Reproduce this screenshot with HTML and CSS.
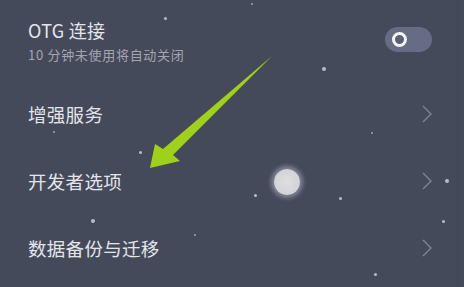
FILE: index.html
```html
<!DOCTYPE html>
<html lang="zh-CN">
<head>
<meta charset="utf-8">
<link rel="stylesheet" href="styles.css">
</head>
<body>
<div class="screen">
  <div class="list">
    <div class="row otg">
      <div class="otg-text">
        <div class="title">OTG 连接</div>
        <div class="sub">10 分钟未使用将自动关闭</div>
      </div>
      <div class="toggle"><span class="knob"></span></div>
    </div>
    <div class="row item">
      <span class="title">增强服务</span>
      <svg class="chev" width="10" height="18" viewBox="0 0 10 18"><path d="M1 1 L9 9 L1 17" fill="none" stroke="#7c8193" stroke-width="1.5"/></svg>
    </div>
    <div class="row item">
      <span class="title">开发者选项</span>
      <svg class="chev" width="10" height="18" viewBox="0 0 10 18"><path d="M1 1 L9 9 L1 17" fill="none" stroke="#7c8193" stroke-width="1.5"/></svg>
    </div>
    <div class="row item">
      <span class="title">数据备份与迁移</span>
      <svg class="chev" width="10" height="18" viewBox="0 0 10 18"><path d="M1 1 L9 9 L1 17" fill="none" stroke="#7c8193" stroke-width="1.5"/></svg>
    </div>
  </div>

  <div class="star s2" style="left:164px;top:17px"></div>
  <div class="star s1" style="left:251px;top:3px"></div>
  <div class="star s3" style="left:322px;top:67px"></div>
  <div class="star s1" style="left:106px;top:61px"></div>
  <div class="star s1" style="left:53px;top:131px"></div>
  <div class="star s2" style="left:139px;top:151px"></div>
  <div class="star s1" style="left:371px;top:132px"></div>
  <div class="star s3" style="left:445px;top:179px"></div>
  <div class="star s2" style="left:254px;top:194px"></div>
  <div class="star s2" style="left:339px;top:197px"></div>
  <div class="star s3" style="left:91px;top:219px"></div>
  <div class="star s1" style="left:194px;top:234px"></div>
  <div class="star s2" style="left:442px;top:220px"></div>
  <div class="star s2" style="left:374px;top:273px"></div>

  <div class="moon"></div>

  <svg class="arrow" width="464" height="287" viewBox="0 0 464 287">
    <polygon points="272,56 173,155 180,161 150,168 155,144 163,149" fill="#9fd11b"/>
  </svg>
  <div class="edge"></div>
</div>
</body>
</html>
```

FILE: styles.css
```css
html, body {
  margin: 0;
  padding: 0;
}
body {
  background: #454a5a;
  font-family: "Noto Sans CJK SC", "Noto Sans", sans-serif;
}
.screen {
  position: relative;
  width: 464px;
  height: 287px;
  overflow: hidden;
  background: #454a5a;
}
.list {
  display: flex;
  flex-direction: column;
  padding: 0 32px 0 28px;
}
.row {
  display: flex;
  justify-content: space-between;
}
.otg {
  height: 80px;
  box-sizing: border-box;
  padding-top: 18px;
  align-items: flex-start;
}
.title {
  font-size: 18px;
  line-height: 24px;
  color: #e4e5ea;
  letter-spacing: 0.3px;
}
.sub {
  margin-top: 4px;
  font-size: 13px;
  line-height: 18px;
  color: #a3a6b1;
  letter-spacing: 0.7px;
}
.item {
  height: 67px;
  align-items: center;
}
.item .title {
  font-size: 18.5px;
}
.toggle {
  margin-top: 9px;
  width: 47px;
  height: 25px;
  border-radius: 13px;
  background: #676c85;
  display: flex;
  align-items: center;
  padding-left: 7px;
  box-sizing: border-box;
}
.knob {
  width: 9px;
  height: 9px;
  border-radius: 50%;
  border: 3px solid #f4f4f6;
  background: #5b5f78;
}
.chev {
  display: block;
}
.star {
  position: absolute;
  border-radius: 50%;
  background: #b9bcc8;
}
.s1 { width: 2px; height: 2px; opacity: 0.8; }
.s2 { width: 3px; height: 3px; }
.s3 { width: 4px; height: 4px; }
.moon {
  position: absolute;
  left: 274px;
  top: 169px;
  width: 26px;
  height: 26px;
  border-radius: 50%;
  background: radial-gradient(circle at 50% 50%, #dedee2 0%, #d2d2d8 70%, #c6c7d0 100%);
  box-shadow: 0 0 4px 3px rgba(190, 192, 215, 0.5);
}
.arrow {
  position: absolute;
  left: 0;
  top: 0;
}
.edge {
  position: absolute;
  left: 457px;
  top: 0;
  width: 1px;
  height: 287px;
  background: #40455a;
}
```
